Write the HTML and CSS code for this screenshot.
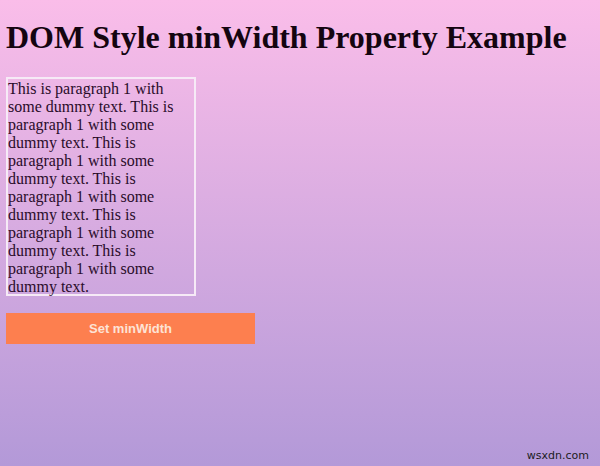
FILE: index.html
```html
<!DOCTYPE html>
<html>
<head>
<meta charset="utf-8">
<link rel="stylesheet" href="styles.css">
</head>
<body>
<div class="page">
  <h1 class="title">DOM Style minWidth Property Example</h1>
  <p class="para">This is paragraph 1 with some dummy text. This is paragraph 1 with some dummy text. This is paragraph 1 with some dummy text. This is paragraph 1 with some dummy text. This is paragraph 1 with some dummy text. This is paragraph 1 with some dummy text.</p>
  <button class="btn">Set minWidth</button>
  <div class="footer"><span class="mark">wsxdn.com</span></div>
</div>
</body>
</html>
```
FILE: styles.css
```css
html, body {
  margin: 0;
  padding: 0;
  height: 100%;
}
body {
  background: linear-gradient(to bottom, #fabde9 0%, #b399d8 100%);
  font-family: "Liberation Serif", "Times New Roman", serif;
  color: #1e0a1e;
}
.page {
  display: flex;
  flex-direction: column;
  align-items: flex-start;
  padding: 19px 6px 0 6px;
  height: 466px;
  box-sizing: border-box;
}
.title {
  margin: 0;
  font-size: 32px;
  font-weight: bold;
  line-height: 36px;
  white-space: nowrap;
  color: #140510;
}
.para {
  margin: 22px 0 0 0;
  width: 186px;
  border: 2px solid #f6eaf6;
  font-size: 16px;
  line-height: 18px;
  padding: 1px 0 0 0;
  height: 214px;
  box-sizing: content-box;
  color: #2a0c2a;
}
.btn {
  margin-top: 17px;
  width: 249px;
  height: 31px;
  background: #fd7f4f;
  border: none;
  color: #fde3d6;
  font-family: "Liberation Sans", Arial, sans-serif;
  font-weight: bold;
  font-size: 13px;
}
.footer {
  margin-top: auto;
  align-self: stretch;
  display: flex;
  justify-content: flex-end;
  padding: 0 5px 4px 0;
}
.mark {
  font-family: "DejaVu Sans", sans-serif;
  font-size: 11px;
  color: #1c1c1c;
}
```
